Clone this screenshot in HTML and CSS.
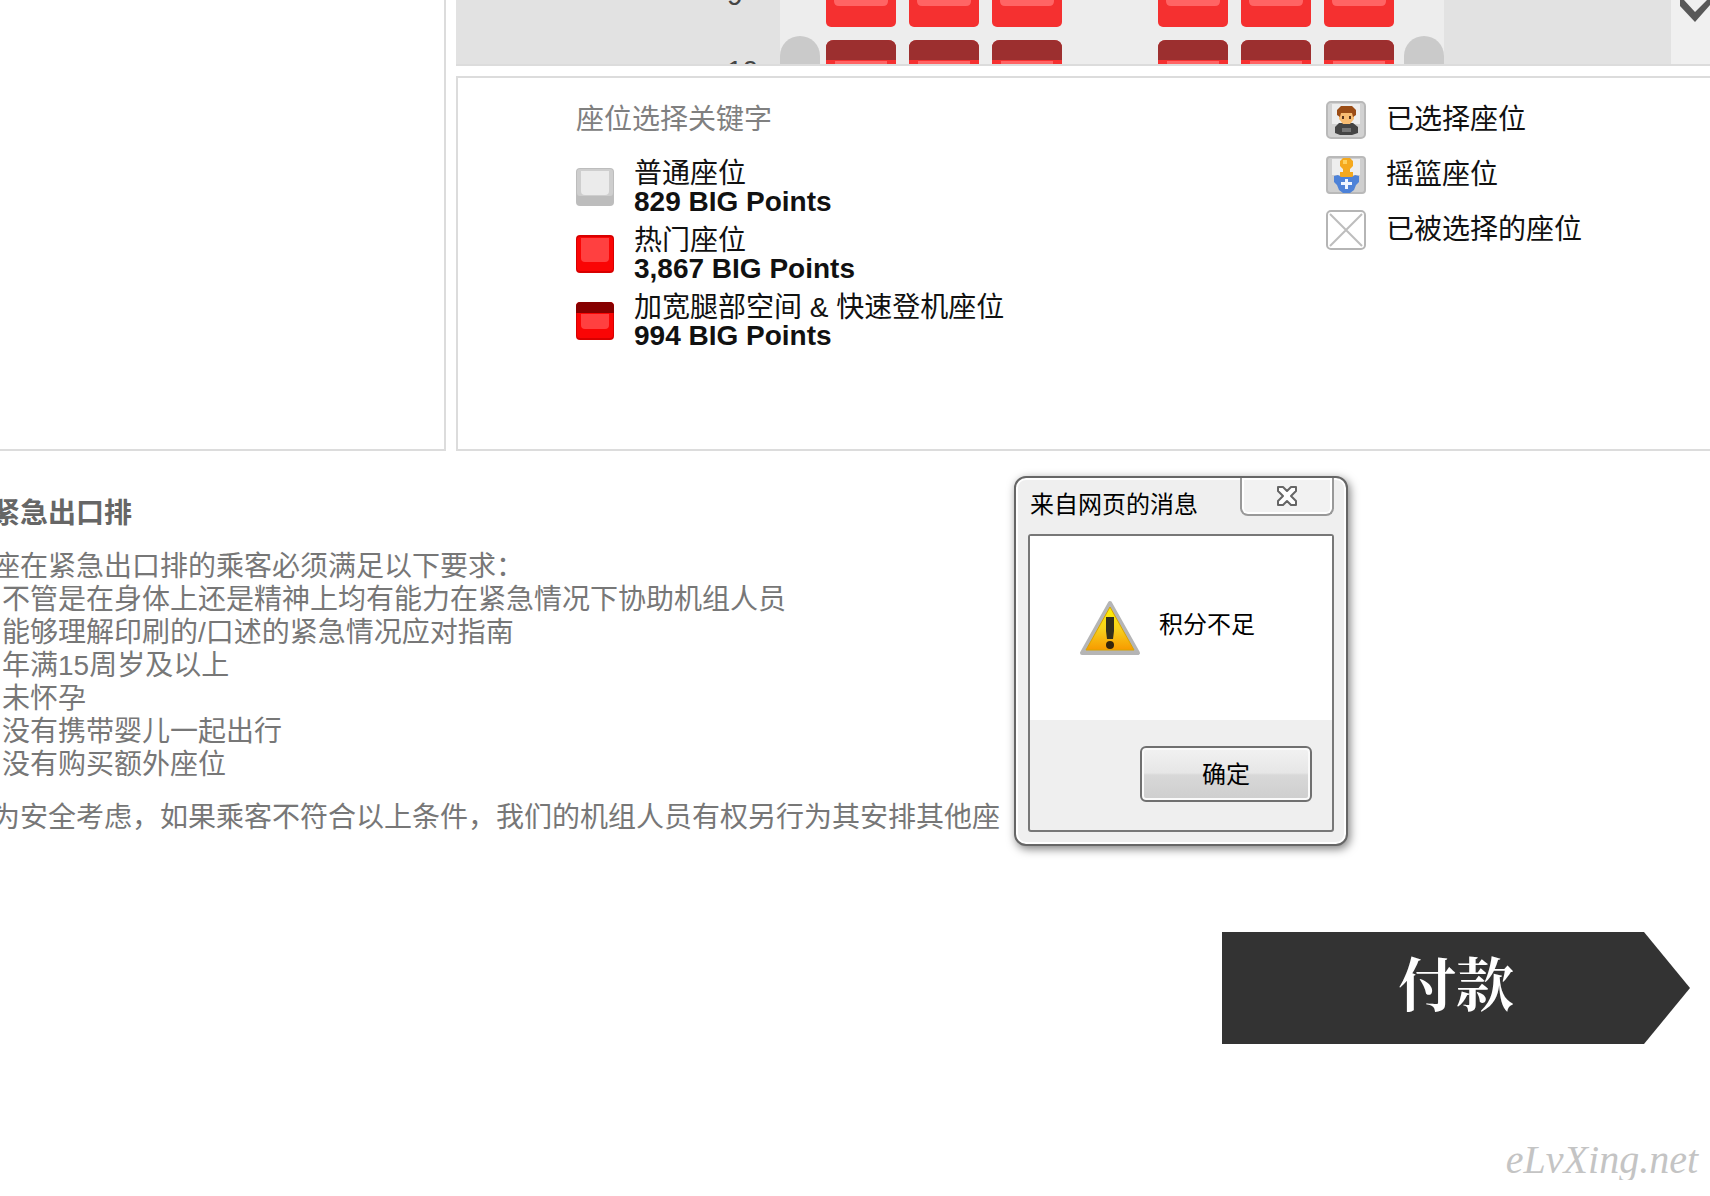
FILE: index.html
```html
<!DOCTYPE html>
<html lang="zh-CN">
  <head>
    <meta charset="UTF-8" />
    <meta name="viewport" content="width=device-width, initial-scale=1.0" />
    <title>座位选择</title>
    <link rel="stylesheet" href="styles.css">
  </head>
  <body>
    <!-- Shared seat shapes -->
    <svg class="defs" width="0" height="0" aria-hidden="true">
      <symbol id="seatHot" viewBox="0 0 70 72">
        <rect width="70" height="72" rx="5" fill="#f53030" />
        <path d="M8 6h54v40q0 5-5 5H13q-5 0-5-5z" fill="#ff6464" />
      </symbol>
      <symbol id="seatWide" viewBox="0 0 70 72">
        <rect width="70" height="72" rx="8" fill="#f53030" />
        <path d="M0 20V8q0-8 8-8h54q8 0 8 8v12z" fill="#9c2f2f" />
        <path d="M9 21h52v32H9z" fill="#ff6464" />
      </symbol>
    </svg>

    <div class="top">
      <div class="sidebar"></div>
      <div class="content">
        <div class="seat-map">
          <div class="wing wing-left">
            <span>9</span>
            <span>10</span>
          </div>
          <div class="cabin">
            <div class="seat-row">
              <i></i>
              <div class="seats">
                <svg><use href="#seatHot" /></svg>
                <svg><use href="#seatHot" /></svg>
                <svg><use href="#seatHot" /></svg>
              </div>
              <div class="seats">
                <svg><use href="#seatHot" /></svg>
                <svg><use href="#seatHot" /></svg>
                <svg><use href="#seatHot" /></svg>
              </div>
              <i></i>
            </div>
            <div class="seat-row">
              <i class="door"></i>
              <div class="seats">
                <svg><use href="#seatWide" /></svg>
                <svg><use href="#seatWide" /></svg>
                <svg><use href="#seatWide" /></svg>
              </div>
              <div class="seats">
                <svg><use href="#seatWide" /></svg>
                <svg><use href="#seatWide" /></svg>
                <svg><use href="#seatWide" /></svg>
              </div>
              <i class="door"></i>
            </div>
          </div>
          <div class="wing"></div>
          <div class="scroll-down">
            <svg width="30" height="22" viewBox="0 0 30 22">
              <path d="M0 0h4l11 12L27 0h3v5L15 22 0 6z" fill="#585858" />
            </svg>
          </div>
        </div>

        <div class="legend">
          <div>
            <h2>座位选择关键字</h2>
            <ul class="prices">
              <li>
                <svg width="38" height="38" viewBox="0 0 38 38">
                  <rect width="38" height="38" rx="4" fill="#bdbdbd" />
                  <rect x="1" y="1" width="36" height="27" rx="3" fill="#cecece" />
                  <path d="M5 3h28v20q0 4-4 4H9q-4 0-4-4z" fill="#ebebeb" />
                </svg>
                <div>普通座位<strong>829 BIG Points</strong></div>
              </li>
              <li>
                <svg width="38" height="38" viewBox="0 0 38 38">
                  <rect width="38" height="38" rx="4" fill="#d80000" />
                  <rect x="1" y="2" width="36" height="34" rx="3" fill="#fa0505" />
                  <path d="M5 3h28v20q0 4-4 4H9q-4 0-4-4z" fill="#ff4040" />
                </svg>
                <div>热门座位<strong>3,867 BIG Points</strong></div>
              </li>
              <li>
                <svg width="38" height="38" viewBox="0 0 38 38">
                  <rect width="38" height="38" rx="4" fill="#d80000" />
                  <rect x="1" y="2" width="36" height="34" rx="3" fill="#fa0505" />
                  <path d="M0 11V5q0-5 5-5h28q5 0 5 5v6z" fill="#860000" />
                  <path d="M5 12h28v11q0 4-4 4H9q-4 0-4-4z" fill="#ff4040" />
                </svg>
                <div>加宽腿部空间 &amp; 快速登机座位<strong>994 BIG Points</strong></div>
              </li>
            </ul>
          </div>
          <ul class="states">
            <li>
              <svg width="40" height="38" viewBox="0 0 40 38">
                <rect x="1" y="1" width="38" height="36" rx="4" fill="#d2d2d2" stroke="#b9b9b9" stroke-width="2" />
                <path d="M6 3h28v20H6z" fill="#eee" />
                <path d="M9 32v-6l4-4h14l5 4v6l-6 2H14z" fill="#454545" />
                <path d="M16 27h9v4h-9z" fill="#777" />
                <path d="M13 11h15v7l-4 5h-7l-4-5z" fill="#f8bd72" />
                <path d="M11 14V9l4-4h11l4 4v5l-3 2-1-4H15l-1 4z" fill="#9b4d16" />
                <path d="M16 15h2v3h-2zM23 15h2v3h-2z" fill="#59351d" />
              </svg>
              已选择座位
            </li>
            <li>
              <svg width="40" height="38" viewBox="0 0 40 38">
                <rect x="1" y="1" width="38" height="36" rx="3" fill="#cfcfcf" stroke="#b9b9b9" stroke-width="2" />
                <path d="M6 3h28v16H6z" fill="#eee" />
                <path d="M14 5l3-3h7l3 3v5l-3 3v3h3v5H14v-5h3v-3l-3-3z" fill="#f5a91d" />
                <path d="M17 4h4v4h-4z" fill="#ffd15c" />
                <path d="M8 20l4-1 3 2h11l3-2 4 1v6l-3 3-2 5-4 3h-7l-4-3-2-5-3-3z" fill="#4d82d8" />
                <path d="M19 23h3v3h4v3h-4v4h-3v-4h-4v-3h4z" fill="#edf4ff" />
              </svg>
              摇篮座位
            </li>
            <li>
              <svg width="40" height="40" viewBox="0 0 40 40">
                <rect x="1" y="1" width="38" height="38" rx="4" fill="#fff" stroke="#b5b5b5" stroke-width="2" />
                <path d="M4 4l32 32M36 4L4 36" stroke="#bdbdbd" stroke-width="2" />
              </svg>
              已被选择的座位
            </li>
          </ul>
        </div>
      </div>
    </div>

    <div class="exit-info">
      <h3>紧急出口排</h3>
      <p>座在紧急出口排的乘客必须满足以下要求：</p>
      <ul>
        <li>不管是在身体上还是精神上均有能力在紧急情况下协助机组人员</li>
        <li>能够理解印刷的/口述的紧急情况应对指南</li>
        <li>年满15周岁及以上</li>
        <li>未怀孕</li>
        <li>没有携带婴儿一起出行</li>
        <li>没有购买额外座位</li>
      </ul>
      <p>为安全考虑，如果乘客不符合以上条件，我们的机组人员有权另行为其安排其他座</p>
    </div>

    <div class="actions">
      <button type="button" class="pay">付款</button>
    </div>
    <div class="watermark">eLvXing.net</div>

    <!-- Message box -->
    <div class="dialog" role="alertdialog" aria-labelledby="dialogTitle">
      <div class="dialog-head">
        <span id="dialogTitle">来自网页的消息</span>
        <button type="button" class="close" aria-label="关闭">
          <svg width="24" height="22" viewBox="0 0 24 22">
            <path d="M3 2h5l4 4 4-4h5v4l-5 5 5 5v4h-5l-4-4-4 4H3v-4l5-5-5-5z" fill="#fff" stroke="#666" stroke-width="2" stroke-linejoin="round" />
          </svg>
        </button>
      </div>
      <div class="dialog-body">
        <div class="message">
          <svg width="62" height="56" viewBox="0 0 62 56">
            <defs>
              <linearGradient id="warn" x1="0" y1="0" x2="0" y2="1">
                <stop offset="0" stop-color="#fff200" />
                <stop offset="0.5" stop-color="#f8d21c" />
                <stop offset="1" stop-color="#f79a00" />
              </linearGradient>
            </defs>
            <path d="M31 3L59 53H3z" fill="#b5b5b5" stroke="#b5b5b5" stroke-width="4" stroke-linejoin="round" />
            <path d="M31 7L55 50H7z" fill="url(#warn)" stroke="#d9a400" />
            <path d="M27 17h8v14l-1 8h-6l-1-8z" fill="#33301c" />
            <circle cx="31" cy="45" r="4" fill="#33240c" />
          </svg>
          <span>积分不足</span>
        </div>
        <div class="dialog-foot">
          <button type="button" class="ok">确定</button>
        </div>
      </div>
    </div>
  </body>
</html>
```
FILE: styles.css
```css
* {
  box-sizing: border-box;
}

body {
  margin: 0;
  background: #fff;
  color: #111;
  font-family: "Liberation Sans", "Noto Sans CJK SC", sans-serif;
  font-size: 28px;
  line-height: 33px;
  overflow-x: hidden;
}

ul {
  list-style: none;
  margin: 0;
  padding: 0;
}

h2,
h3,
p {
  margin: 0;
  font-size: 28px;
}

svg {
  display: block;
  flex: none;
}

button {
  font-family: inherit;
  cursor: pointer;
}

.defs {
  position: absolute;
}

/* Top panels */
.top {
  display: grid;
  grid-template-columns: 446px 1fr;
  gap: 10px;
}

.sidebar {
  border: 2px solid #dcdcdc;
  border-width: 0 2px 2px 0;
}

.content {
  min-width: 0;
}

/* Seat map, scrolled so only part of two rows shows */
.seat-map {
  display: flex;
  height: 66px;
  overflow: hidden;
  background: #e2e2e2;
  border-bottom: 2px solid #dcdcdc;
}

.wing {
  flex: 1;
}

.wing-left {
  flex: 0 0 324px;
  display: flex;
  flex-direction: column;
  gap: 42px;
  margin-top: -21px;
  padding-left: 271px;
  color: #444;
}

.cabin {
  flex: 0 0 664px;
  margin-top: -45px;
  background: #ededed;
}

.seat-row {
  display: grid;
  grid-template-columns: 46px 332px 246px 40px;
  margin-bottom: 13px;
}

.seats {
  display: flex;
  gap: 13px;
}

.seats svg {
  width: 70px;
  height: 72px;
}

.door {
  width: 40px;
  margin-top: -4px;
  border-radius: 20px 20px 0 0;
  background: #cacaca;
}

.scroll-down {
  flex: 0 0 39px;
  padding-left: 9px;
  background: #f0f0f0;
}

/* Legend */
.legend {
  display: grid;
  grid-template-columns: 750px 1fr;
  height: 375px;
  margin-top: 10px;
  padding: 25px 0 0 118px;
  border: 2px solid #dcdcdc;
  border-right: 0;
}

.legend h2 {
  margin-bottom: 17px;
  font-weight: normal;
  color: #808080;
}

.legend li {
  display: flex;
  align-items: center;
  gap: 20px;
}

.prices li {
  height: 67px;
}

.prices div {
  padding-bottom: 3px;
}

.prices strong {
  display: block;
  line-height: 24px;
}

.states li {
  height: 55px;
}

.states {
  margin-top: -11px;
}

/* Emergency exit notes */
.exit-info {
  margin: 46px 0 0 -8px;
  color: #777;
}

.exit-info h3 {
  margin-bottom: 20px;
  color: #666;
}

.exit-info ul {
  margin-bottom: 20px;
  padding-left: 10px;
}

/* Payment */
.actions {
  display: flex;
  justify-content: flex-end;
  margin: 98px 20px 0;
}

.pay {
  width: 468px;
  height: 112px;
  padding: 0 0 14px;
  border: 0;
  background: #333;
  clip-path: polygon(0 0, 422px 0, 100% 50%, 422px 100%, 0 100%);
  color: #fff;
  font-family: "Noto Serif CJK SC", "Noto Sans CJK SC", serif;
  font-size: 58px;
  font-weight: bold;
}

.watermark {
  margin: 96px 12px 0;
  text-align: right;
  font-family: "Liberation Serif", serif;
  font-style: italic;
  font-size: 40px;
  line-height: 40px;
  color: #c4c4c4;
}

/* Message box over the page */
.dialog {
  position: absolute;
  top: 476px;
  left: 1014px;
  width: 334px;
  padding: 0 12px 12px;
  border: 2px solid #666;
  border-radius: 12px;
  background: #efefef;
  box-shadow: inset 0 0 0 2px #fff, 2px 3px 10px rgba(0, 0, 0, 0.5);
  font-size: 24px;
  color: #000;
}

.dialog-head {
  display: flex;
  justify-content: space-between;
  height: 56px;
  padding-left: 2px;
  line-height: 54px;
}

.close {
  display: flex;
  align-items: center;
  justify-content: center;
  width: 94px;
  height: 38px;
  border: 2px solid #999;
  border-top: 0;
  border-radius: 0 0 8px 8px;
  background: #f2f2f2;
  box-shadow: inset 0 0 0 2px #fff;
}

.dialog-body {
  border: 2px solid #777;
  border-radius: 3px;
  background: #efefef;
}

.message {
  display: flex;
  align-items: center;
  gap: 18px;
  height: 184px;
  padding-left: 49px;
  background: #fff;
}

.message span {
  padding-bottom: 8px;
}

.dialog-foot {
  display: flex;
  justify-content: flex-end;
  padding: 26px 20px 28px;
}

.ok {
  width: 172px;
  height: 56px;
  padding: 0 0 4px;
  border: 2px solid #707070;
  border-radius: 6px;
  background: linear-gradient(#f2f2f2, #e6e6e6 48%, #d8d8d8 52%, #cecece);
  box-shadow: inset 0 0 0 2px #fafafa;
  font-size: 24px;
  color: #000;
}
```
